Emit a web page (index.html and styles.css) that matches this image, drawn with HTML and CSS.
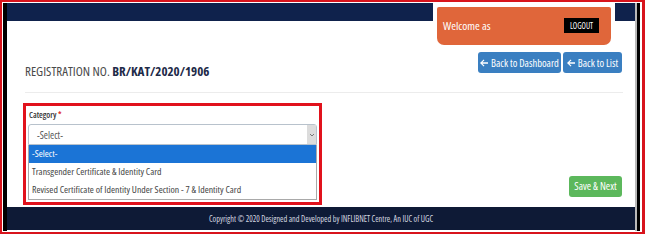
FILE: index.html
```html
<!DOCTYPE html>
<html lang="en">
<head>
<meta charset="utf-8">
<title>Registration</title>
<link rel="stylesheet" href="styles.css">
</head>
<body>
<div class="frame">
  <div class="page">
    <div class="inner">
      <header class="topbar"></header>
      <div class="user-panel">
        <div class="user-box">
          <span class="welcome">Welcome as</span>
          <span class="logout">LOGOUT</span>
        </div>
      </div>
      <main class="main">
        <div class="title-row">
          <h1 class="title">REGISTRATION NO. <b>BR/KAT/2020/1906</b></h1>
          <div class="actions">
            <a class="btn btn-blue btn-dash"><svg class="arrow" viewBox="0 0 10 10"><polygon points="0,5 4.6,0.6 5.6,1.6 3,4.1 10,4.1 10,5.9 3,5.9 5.6,8.4 4.6,9.4"/></svg>Back to Dashboard</a>
            <a class="btn btn-blue btn-list"><svg class="arrow" viewBox="0 0 10 10"><polygon points="0,5 4.6,0.6 5.6,1.6 3,4.1 10,4.1 10,5.9 3,5.9 5.6,8.4 4.6,9.4"/></svg>Back to List</a>
          </div>
        </div>
        <div class="divider"></div>
        <div class="form-row">
          <div class="field-box">
            <div class="label">Category <span class="req">*</span></div>
            <div class="select">
              <span class="select-text">-Select-</span>
              <span class="select-btn"><svg viewBox="0 0 8 8"><polyline points="2,3 4,5 6,3"/></svg></span>
            </div>
            <ul class="options">
              <li class="option active">-Select-</li>
              <li class="option">Transgender Certificate &amp; Identity Card</li>
              <li class="option">Revised Certificate of Identity Under Section - 7 &amp; Identity Card</li>
            </ul>
          </div>
          <div class="save-wrap">
            <a class="btn btn-green">Save &amp; Next</a>
          </div>
        </div>
      </main>
      <footer class="footer">Copyright © 2020 Designed and Developed by INFLIBNET Centre, An IUC of UGC</footer>
    </div>
  </div>
</div>
</body>
</html>
```

FILE: styles.css
```css
* { box-sizing: border-box; }
html, body { margin: 0; padding: 0; background: #fff; }
body {
  font-family: "Open Sans", "Liberation Sans", sans-serif;
  font-stretch: 75%;
  color: #333;
}
.frame {
  width: 645px;
  height: 234px;
  border: 2px solid #d8141c;
  border-right-width: 3px;
  padding: 1px 2px 1px 1px;
  background: #fff;
}
.page {
  height: 100%;
  border-left: 4px solid #000;
  border-right: 3px solid #000;
}
.inner {
  position: relative;
  height: 100%;
  border-right: 2px solid #b9b9b9;
  display: flex;
  flex-direction: column;
  padding-bottom: 1px;
}
.topbar {
  height: 18px;
  background: #0f224c;
  flex: none;
}
.user-panel {
  position: absolute;
  top: 0;
  right: 20px;
  width: 182px;
  padding: 4px 4px 4px 4px;
  background: #fff;
  border-radius: 0 0 6px 6px;
}
.user-box {
  height: 38px;
  background: #e0663a;
  border-radius: 2px 2px 7px 7px;
  display: flex;
  align-items: flex-start;
  justify-content: space-between;
  padding: 11px 12px 0 6px;
}
.welcome {
  color: #fff;
  font-size: 11.5px;
  line-height: 15px;
}
.logout {
  background: #000;
  color: #fff;
  font-size: 8px;
  line-height: 15px;
  height: 15px;
  width: 35px;
  text-align: center;
}
.main {
  flex: 1;
  padding: 0 12px 0 18px;
  display: flex;
  flex-direction: column;
}
.title-row {
  display: flex;
  justify-content: space-between;
  align-items: flex-start;
}
.title {
  margin: 40px 0 0 0;
  font-size: 13px;
  line-height: 20px;
  font-weight: 400;
  color: #4a4a4a;
}
.title b {
  font-weight: 700;
  color: #1d2a48;
}
.actions {
  display: flex;
  gap: 2px;
  margin-top: 31px;
  margin-right: 1px;
}
.btn {
  display: inline-flex;
  align-items: center;
  justify-content: center;
  height: 21px;
  border-radius: 3px;
  color: #fff;
  font-size: 10.5px;
  text-decoration: none;
}
.btn-blue { background: #3a7fc1; }
.btn-dash { width: 83px; }
.btn-list { width: 59px; }
.arrow {
  width: 8px;
  height: 8px;
  fill: #fff;
  margin-right: 3px;
}
.divider {
  height: 1px;
  background: #ececec;
  margin-top: 11px;
}
.form-row {
  display: flex;
  justify-content: space-between;
  align-items: flex-start;
  margin-top: 10px;
}
.field-box {
  width: 299px;
  margin-left: -2px;
  border: 3px solid #e1121c;
  padding: 3px 2px 2px 2px;
}
.label {
  font-size: 8.5px;
  font-weight: 600;
  line-height: 12px;
  padding-left: 1px;
  margin-bottom: 3px;
  color: #333;
}
.req { color: #e01f1f; }
.select {
  height: 21px;
  border: 1px solid #b8c2cc;
  border-radius: 3px 3px 0 0;
  display: flex;
  align-items: center;
  justify-content: space-between;
  padding: 0 0 0 8px;
}
.select-text {
  font-size: 10px;
  color: #555;
}
.select-btn {
  width: 9px;
  height: 19px;
  background: #dcdcdc;
  display: flex;
  align-items: center;
  justify-content: center;
}
.select-btn svg {
  width: 8px;
  height: 8px;
  fill: none;
  stroke: #777;
  stroke-width: 1;
}
.options {
  list-style: none;
  margin: 0;
  padding: 0;
  border: 1px solid #a9a9a9;
  border-top: none;
}
.option {
  height: 18px;
  line-height: 18px;
  font-size: 9.8px;
  color: #444;
  padding-left: 3px;
  white-space: nowrap;
}
.option.active {
  background: #1b74d6;
  color: #fff;
}
.save-wrap {
  margin-top: 70px;
  margin-right: 1px;
}
.btn-green {
  background: #5cb85c;
  width: 53px;
}
.footer {
  height: 23px;
  flex: none;
  background: #0e1a36;
  color: #d5d8e0;
  font-size: 8.2px;
  line-height: 23px;
  text-align: center;
}
```
